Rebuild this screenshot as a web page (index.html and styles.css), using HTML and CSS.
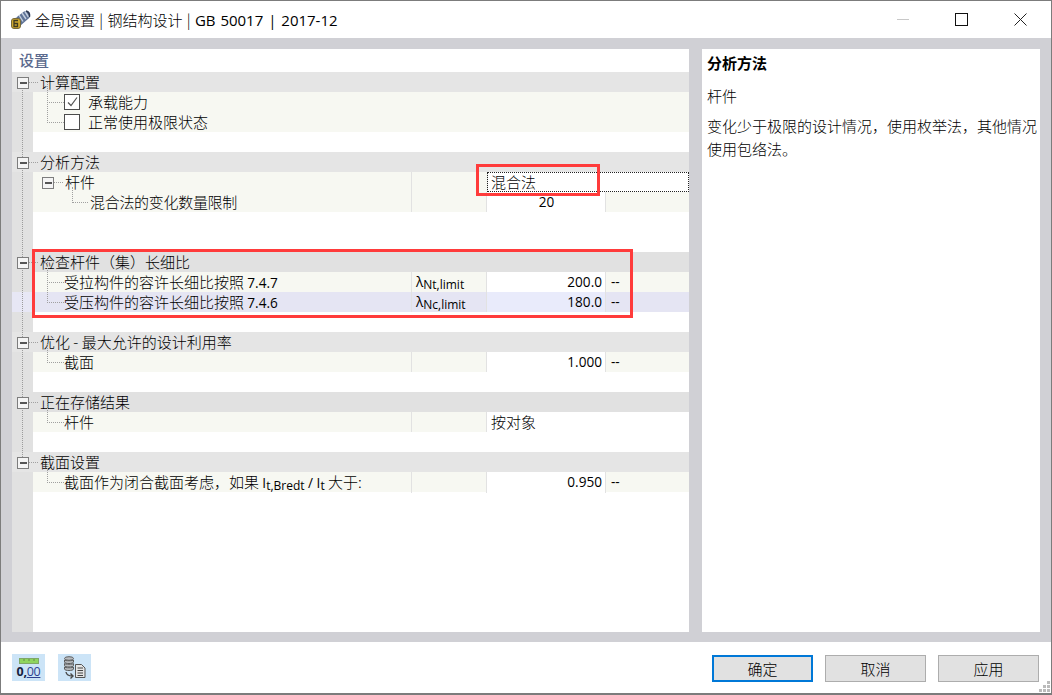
FILE: index.html
```html
<!DOCTYPE html>
<html lang="zh">
<head>
<meta charset="utf-8">
<title>全局设置</title>
<link rel="stylesheet" href="styles.css">
</head>
<body>
<div class="window">
  <header class="titlebar">
    <svg class="app-icon" width="21" height="21" viewBox="0 0 21 21">
      <path d="M3 11 L14 2.500 Q18 1 20 4 Q21 8 18 10 L10 17 Z" fill="#5f7396"/>
      <path d="M6 8.500L10 15M9 6L13 12.500M12 4L16 10M15 2.500L18.500 8" stroke="#c4cfdf" stroke-width="1.400"/>
      <path d="M16 2Q20 3 19.500 8" stroke="#2f3a52" stroke-width="1.400" fill="none"/>
      <rect x="1.500" y="9.500" width="9" height="10" rx="2.500" fill="#cfa92f" stroke="#77693a"/>
      <path d="M8 11.500H4V17.500H7.500V14.500H4" stroke="#3f3a22" stroke-width="1.300" fill="none"/>
    </svg>
    <span class="title-text">全局设置 | 钢结构设计 | <span class="lat title-lat">GB 50017 | 2017-12</span></span>
    <div class="win-controls">
      <svg class="ctl-min" width="12" height="12" viewBox="0 0 12 12"><path d="M0 5.500H12" stroke="#c8c8c8"/></svg>
      <svg class="ctl-max" width="13" height="13" viewBox="0 0 13 13"><rect x=".5" y=".5" width="12" height="12" fill="none" stroke="#111"/></svg>
      <svg class="ctl-close" width="13" height="13" viewBox="0 0 13 13"><path d="M.5 .5L12.500 12.500M12.500 .5L.5 12.500" stroke="#222"/></svg>
    </div>
  </header>

  <main class="workspace">
    <section class="settings">
      <div class="settings-head"><span class="settings-title">设置</span></div>
      <div class="tree">
        <div class="trunk"></div>

        <div class="row section"><span class="gutter"><i class="exp"></i></span><span class="label">计算配置</span></div>
        <div class="row check first"><span class="gutter"></span><span class="label wide"><span class="box"><svg width="14" height="14" viewBox="0 0 14 14"><path d="M3 7.500L6 10.500L12 2.500" fill="none" stroke="#555" stroke-width="1.200"/></svg></span>承载能力</span></div>
        <div class="row check"><span class="gutter"></span><span class="label wide"><span class="box"></span>正常使用极限状态</span></div>
        <div class="row blank"><span class="gutter"></span></div>

        <div class="row section"><span class="gutter"><i class="exp"></i></span><span class="label">分析方法</span></div>
        <div class="row item first nested-parent"><span class="gutter"></span><span class="label"><i class="exp sub"></i>杆件</span><span class="sym"></span><span class="val focus">混合法</span></div>
        <div class="row item deep"><span class="gutter"></span><span class="label">混合法的变化数量限制</span><span class="sym"></span><span class="val white center lat">20</span><span class="unit"></span></div>
        <div class="row blank"><span class="gutter"></span></div>
        <div class="row blank"><span class="gutter"></span></div>

        <div class="row section dark"><span class="gutter"><i class="exp"></i></span><span class="label">检查杆件（集）长细比</span></div>
        <div class="row item first"><span class="gutter"></span><span class="label">受拉构件的容许长细比按照 <span class="lat">7.4.7</span></span><span class="sym lat">λ<sub>Nt,limit</sub></span><span class="val white num lat">200.0</span><span class="unit lat">--</span></div>
        <div class="row item hover"><span class="gutter"></span><span class="label">受压构件的容许长细比按照 <span class="lat">7.4.6</span></span><span class="sym lat">λ<sub>Nc,limit</sub></span><span class="val white num lat">180.0</span><span class="unit lat">--</span></div>
        <div class="row blank"><span class="gutter"></span></div>

        <div class="row section"><span class="gutter"><i class="exp"></i></span><span class="label">优化 - 最大允许的设计利用率</span></div>
        <div class="row item first"><span class="gutter"></span><span class="label">截面</span><span class="sym"></span><span class="val white num lat">1.000</span><span class="unit lat">--</span></div>
        <div class="row blank"><span class="gutter"></span></div>

        <div class="row section dark"><span class="gutter"><i class="exp"></i></span><span class="label">正在存储结果</span></div>
        <div class="row item first"><span class="gutter"></span><span class="label">杆件</span><span class="sym"></span><span class="val span-white">按对象</span></div>
        <div class="row blank"><span class="gutter"></span></div>

        <div class="row section"><span class="gutter"><i class="exp"></i></span><span class="label">截面设置</span></div>
        <div class="row item first"><span class="gutter"></span><span class="label">截面作为闭合截面考虑，如果 <span class="lat">I<sub>t,Bredt</sub> / I<sub>t</sub></span> 大于:</span><span class="sym"></span><span class="val white num lat">0.950</span><span class="unit lat">--</span></div>
        <div class="tree-fill"></div>

        <div class="mark mark-method"></div>
        <div class="mark mark-slender"></div>
      </div>
    </section>

    <aside class="help">
      <h2 class="help-title">分析方法</h2>
      <p class="help-sub">杆件</p>
      <p class="help-body">变化少于极限的设计情况，使用枚举法，其他情况使用包络法。</p>
    </aside>
  </main>

  <footer class="footer">
    <div class="tools">
      <div class="tool">
        <svg class="ruler" width="20" height="6" viewBox="0 0 20 6"><rect x=".5" y=".5" width="19" height="5" fill="#8fd45e" stroke="#7fa868"/><path d="M5 1V3M10 1V3M15 1V3" stroke="#5f8a48"/></svg>
        <span class="zero"><b>0,</b><u>00</u></span>
      </div>
      <div class="tool">
        <svg width="23" height="23" viewBox="0 0 23 23">
          <g fill="#b9bcc0" stroke="#5c5c5c" stroke-width="1">
            <ellipse cx="6" cy="2.500" rx="4.500" ry="1.800"/>
            <path d="M1.500 6C1.500 8 10.500 8 10.500 6V4C10.500 5 1.500 5 1.500 4Z"/>
            <path d="M1.500 9.500C1.500 11.500 10.500 11.500 10.500 9.500V7.500C10.500 8.500 1.500 8.500 1.500 7.500Z"/>
            <path d="M1.500 13C1.500 15 10.500 15 10.500 13V11C10.500 12 1.500 12 1.500 11Z"/>
          </g>
          <path d="M3 16C3.500 19 6 20 9.500 20M7.500 17.500L10 20L7.500 22.500" fill="none" stroke="#4a4a4a" stroke-width="1.400"/>
          <path d="M12.500 8.500H18.500L22 12V21.500H12.500Z" fill="#e4e4e4" stroke="#555"/>
          <path d="M14.500 12H20M14.500 14.500H20M14.500 17H20M14.500 19.500H20" stroke="#444"/>
        </svg>
      </div>
    </div>
    <div class="actions">
      <button class="btn primary">确定</button>
      <button class="btn">取消</button>
      <button class="btn">应用</button>
    </div>
    <svg class="grip" width="11" height="11" viewBox="0 0 11 11" fill="#bbb">
      <rect x="8" y="0" width="3" height="3"/><rect x="4" y="4" width="3" height="3"/><rect x="8" y="4" width="3" height="3"/>
      <rect x="0" y="8" width="3" height="3"/><rect x="4" y="8" width="3" height="3"/><rect x="8" y="8" width="3" height="3"/>
    </svg>
  </footer>
</div>
</body>
</html>
```

FILE: styles.css
```css
* { box-sizing: border-box; }
html, body { margin: 0; height: 100%; }
body {
  font-family: "Noto Sans CJK SC", sans-serif;
  font-size: 15px;
  font-weight: 300;
  color: #000;
  background: #fff;
  overflow: hidden;
}
.lat { font-family: "Open Sans", "Noto Sans CJK SC", sans-serif; font-size: 13.600px; font-weight: 400; }
.title-lat { font-size: 15px; }

.window {
  width: 1052px;
  height: 695px;
  border: 1px solid #7c7c7c;
  border-bottom-width: 2px;
  display: flex;
  flex-direction: column;
  background: #fff;
}

/* title bar */
.titlebar {
  height: 37px;
  flex: none;
  display: flex;
  align-items: center;
  padding-left: 9px;
}
.app-icon { flex: none; margin-right: 4px; }
.title-text { white-space: nowrap; word-spacing: 1px; }
.win-controls {
  margin-left: auto;
  display: flex;
  align-items: center;
  padding-right: 24px;
  gap: 46px;
}

/* workspace */
.workspace {
  flex: 1;
  min-height: 0;
  background: #d0d0d5;
  padding: 11px 11px 10px;
  display: flex;
  gap: 13px;
}
.settings {
  width: 677px;
  flex: none;
  background: #fff;
  display: flex;
  flex-direction: column;
}
.settings-head { height: 23px; flex: none; display: flex; align-items: center; padding: 0 0 2px 7px; }
.settings-title { color: #5b6a8e; font-weight: 500; line-height: 21px; }

.tree {
  position: relative;
  flex: 1;
  display: flex;
  flex-direction: column;
  background: linear-gradient(#e1e1e1, #e1e1e1) left top / 21px 100% no-repeat;
}
.trunk {
  position: absolute;
  left: 10px;
  top: 16px;
  height: 375px;
  border-left: 1px dotted #9c9c9c;
  z-index: 1;
}

.row {
  position: relative;
  height: 20px;
  flex: none;
  display: grid;
  grid-template-columns: 21px 378px 75px 119px 84px;
  line-height: 20px;
}
.gutter { background: #e1e1e1; display: block; height: 100%; }
.label { white-space: nowrap; padding-left: 7px; position: relative; }

.section { background: #e5e5e5; }
.section.dark { background: #e1e1e1; }
.section .gutter { background: transparent; }
.section .label { grid-column: 2 / -1; }
.section .gutter::after {
  content: "";
  position: absolute;
  left: 16px;
  top: 10px;
  width: 10px;
  border-top: 1px dotted #a0a0a0;
}

.exp {
  position: absolute;
  left: 5px;
  top: 5px;
  width: 12px;
  height: 12px;
  background: #f4f4f4;
  border: 1.500px solid #7d7d7d;
  z-index: 2;
}
.exp::after {
  content: "";
  position: absolute;
  left: 1.500px;
  right: 1.500px;
  top: 3.500px;
  border-top: 2px solid #555;
}
.exp.sub { left: 9px; top: 5px; }

.item, .check { background: #f7f8f2; }
.item .label { padding-left: 31px; }
.item .label::before, .check .label::before {
  content: "";
  position: absolute;
  left: 14px;
  top: -10px;
  width: 16px;
  height: 20px;
  border-left: 1px dotted #a0a0a0;
  border-bottom: 1px dotted #a0a0a0;
}
.nested-parent .label::before { display: none; }
.nested-parent .label { padding-left: 32px; }
.nested-parent .label::after {
  content: "";
  position: absolute;
  left: 21px;
  top: 10px;
  width: 9px;
  border-top: 1px dotted #a0a0a0;
}
.deep .label { padding-left: 57px; letter-spacing: -.3px; }
.deep .label::before { left: 39px; width: 15px; top: -5px; height: 15px; }

.check { grid-template-columns: 21px 1fr; }
.check .label.wide { padding-left: 31px; display: flex; align-items: center; }
.box {
  width: 16px;
  height: 16px;
  border: 1px solid #4c4c4c;
  background: #fff;
  margin-right: 8px;
  display: flex;
  align-items: center;
  justify-content: center;
  flex: none;
}

.sym, .val, .unit {
  border-left: 1px solid #e2e2e2;
  white-space: nowrap;
}
.sym { padding-left: 4px; }
sub { font-size: 12px; line-height: 0; vertical-align: -2px; }
.val { padding: 0 3px 0 4px; }
.val.white { background: #fff; }
.val.center { text-align: center; }
.val.num { text-align: right; }
.unit { padding-left: 5px; }
.val.focus, .val.span-white {
  grid-column: 4 / 6;
  background: #fff;
}
.val.focus {
  outline: 1px dotted #222;
  outline-offset: -1px;
  margin-left: 1px;
  padding-left: 3px;
}

.hover { background: #e5e5f3; }
.hover .gutter { background: #e7e7f5; }
.hover .sym { background: #e5e5f3; }
.hover .val.white { background: #e9ebfb; }

.blank { background: #fff; }
.tree-fill { flex: 1; }

.mark {
  position: absolute;
  border: 3px solid #ff3b3b;
  z-index: 3;
  pointer-events: none;
}
.mark-method { left: 464px; top: 92px; width: 124px; height: 32px; }
.mark-slender { left: 20px; top: 177px; width: 601px; height: 69px; }

/* help */
.help { flex: 1; background: #fff; padding: 0 0 0 5px; }
.help-title { margin: 2px 0 0; font-size: 15px; font-weight: 700; line-height: 23px; }
.help-sub { margin: 10px 0 0; line-height: 23px; }
.help-body { margin: 7px 0 0; line-height: 23px; }

/* footer */
.footer {
  height: 51px;
  flex: none;
  position: relative;
  display: flex;
  align-items: flex-start;
  justify-content: space-between;
  padding: 12px 12px 0 11px;
}
.tools { display: flex; gap: 13px; }
.tool {
  width: 33px;
  height: 27px;
  background: #cce4f7;
  display: flex;
  flex-direction: column;
  align-items: center;
  justify-content: center;
}
.ruler { margin-top: 1px; flex: none; }
.zero {
  font-family: "Open Sans", sans-serif;
  font-size: 12.500px;
  line-height: 15px;
  color: #16213f;
  display: block;
  letter-spacing: -.3px;
}
.zero b { font-weight: 700; }
.zero u { color: #2d3f8f; font-weight: 500; }
.actions { display: flex; gap: 12px; margin-top: 1px; }
.btn {
  width: 101px;
  height: 27px;
  background: #e1e1e1;
  border: 1px solid #adadad;
  font-family: "Noto Sans CJK SC", sans-serif;
  font-size: 15px;
  font-weight: 300;
  color: #000;
  padding: 0;
}
.btn.primary { border: 2px solid #0078d7; }
.grip { position: absolute; right: 1px; bottom: 1px; }
```
